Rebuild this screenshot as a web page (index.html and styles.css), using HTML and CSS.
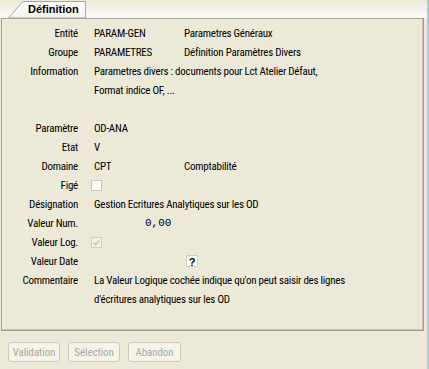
FILE: index.html
```html
<!DOCTYPE html>
<html lang="fr">
<head>
<meta charset="utf-8">
<link rel="stylesheet" href="styles.css">
</head>
<body>
<div class="window">
  <div class="tabstrip">
    <div class="tab">
      <svg class="tab-shape" width="80" height="18" viewBox="0 0 80 18">
        <defs>
          <linearGradient id="tg" x1="0" y1="0" x2="0" y2="1">
            <stop offset="0" stop-color="#fcfcfb"/>
            <stop offset="1" stop-color="#f4f3ee"/>
          </linearGradient>
        </defs>
        <path d="M0.5 18 L14 2.5 Q15 1.5 17 1.5 L77.5 1.5 L77.5 18 Z" fill="url(#tg)" stroke="#a9a79a" stroke-width="1"/>
      </svg>
      <span class="tab-label">Définition</span>
    </div>
  </div>
  <div class="panel">
    <div class="form">
      <div class="lbl">Entité</div><div class="val">PARAM-GEN</div><div class="val">Parametres Généraux</div>
      <div class="lbl">Groupe</div><div class="val">PARAMETRES</div><div class="val">Définition Paramètres Divers</div>
      <div class="lbl">Information</div><div class="val span2">Parametres divers : documents pour Lct Atelier Défaut,<br>Format indice OF, ...</div>
      <div class="blank"></div>
      <div class="lbl">Paramètre</div><div class="val">OD-ANA</div><div class="val"></div>
      <div class="lbl">Etat</div><div class="val">V</div><div class="val"></div>
      <div class="lbl">Domaine</div><div class="val">CPT</div><div class="val">Comptabilité</div>
      <div class="lbl">Figé</div><div class="val"><span class="chk"></span></div><div class="val"></div>
      <div class="lbl">Désignation</div><div class="val span2">Gestion Ecritures Analytiques sur les OD</div>
      <div class="lbl">Valeur Num.</div><div class="val num">0,00</div><div class="val"></div>
      <div class="lbl">Valeur Log.</div><div class="val"><span class="chk disabled"><svg width="9" height="9" viewBox="0 0 9 9"><path d="M1.5 4.5 L3.5 6.5 L7.5 2.5" fill="none" stroke="#c4c3ba" stroke-width="1.6"/></svg></span></div><div class="val"></div>
      <div class="lbl">Valeur Date</div><div class="val"></div><div class="val"><span class="qbtn">?</span></div>
      <div class="lbl">Commentaire</div><div class="val span2">La Valeur Logique cochée indique qu'on peut saisir des lignes<br>d'écritures analytiques sur les OD</div>
    </div>
  </div>
  <div class="buttons">
    <button class="btn" disabled>Validation</button>
    <button class="btn" disabled>Sélection</button>
    <button class="btn" disabled>Abandon</button>
  </div>
</div>
</body>
</html>
```

FILE: styles.css
```css
html, body {
  margin: 0;
  padding: 0;
  height: 100%;
  background: #ece9d8;
}
body {
  font-family: "Roboto Condensed", "Liberation Sans", Arial, sans-serif;
  font-size: 11px;
  letter-spacing: -0.25px;
  color: #000;
  overflow: hidden;
}
.window {
  width: 427px;
  height: 369px;
  border-right: 2px solid #a6c8f3;
  background: #ece9d8;
}
.tabstrip {
  height: 18px;
  background: linear-gradient(#ece9d8, #fbfaf6);
  padding-left: 8px;
  display: flex;
  align-items: flex-end;
}
.tab {
  position: relative;
  width: 80px;
  height: 18px;
}
.tab-shape {
  position: absolute;
  left: 0;
  top: 0;
}
.tab-label {
  position: relative;
  display: block;
  padding-left: 20px;
  padding-top: 2px;
  font-family: "Liberation Sans", Arial, sans-serif;
  letter-spacing: 0;
  font-weight: bold;
  font-size: 11px;
  line-height: 14px;
}
.panel {
  margin-left: 1px;
  width: 423px;
  height: 313px;
  border: 1px solid #a09f94;
  border-top: 1px solid #a9a79a;
  box-shadow: inset -1px -1px 0 #c7c5b8;
  box-sizing: border-box;
  padding-top: 5px;
}
.form {
  display: grid;
  grid-template-columns: 76px 74px auto;
  column-gap: 16px;
  grid-auto-rows: minmax(19px, auto);
  line-height: 19px;
}
.lbl {
  text-align: right;
  white-space: nowrap;
}
.val {
  white-space: nowrap;
}
.span2 {
  grid-column: 2 / 4;
}
.blank {
  grid-column: 1 / 4;
  height: 19px;
}
.num {
  font-family: "Liberation Mono", monospace;
  letter-spacing: 0;
  font-size: 11px;
  padding-left: 51px;
}
.chk {
  display: inline-block;
  width: 11px;
  height: 11px;
  box-sizing: border-box;
  border: 1px solid #c9c7ba;
  background: #fff;
  vertical-align: -2px;
  margin-left: -3px;
}
.chk.disabled {
  background: #f2f1ea;
  border-color: #cfcdc2;
}
.chk svg {
  display: block;
}
.qbtn {
  display: inline-block;
  width: 12px;
  height: 12px;
  line-height: 12px;
  text-align: center;
  font-family: "Liberation Sans", Arial, sans-serif;
  letter-spacing: 0;
  font-weight: bold;
  font-size: 11px;
  background: #fff;
  border: 1px solid #d2d0c4;
  box-sizing: border-box;
  vertical-align: -1px;
  margin-left: 2px;
}
.buttons {
  display: flex;
  gap: 8px;
  padding: 11px 0 0 8px;
}
.btn {
  font-family: "Roboto Condensed", "Liberation Sans", Arial, sans-serif;
  font-size: 11px;
  letter-spacing: -0.1px;
  height: 20px;
  width: 52px;
  padding: 0;
  border: 1px solid #cdcbc0;
  border-radius: 3px;
  background: #f5f4ea;
  color: #aca899;
}
.btn + .btn + .btn {
  width: 53px;
}
```
